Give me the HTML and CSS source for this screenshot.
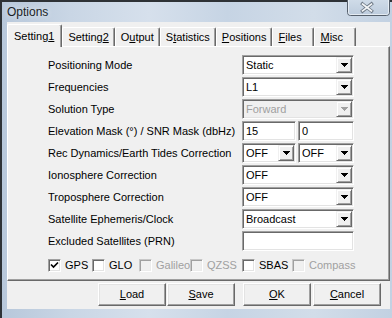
FILE: index.html
```html
<!DOCTYPE html>
<html>
<head>
<meta charset="utf-8">
<link rel="stylesheet" href="styles.css">
</head>
<body>
<div class="window">
  <div class="titlebar">
    <span class="title">Options</span>
    <svg class="close" width="43" height="16" viewBox="0 0 43 16">
      <defs>
        <linearGradient id="cg" x1="0" y1="0" x2="0" y2="1">
          <stop offset="0" stop-color="#cfdbe8"/>
          <stop offset="1" stop-color="#bccbdc"/>
        </linearGradient>
      </defs>
      <path d="M0.5 0 V12.5 a3 3 0 0 0 3 3 H39.5 a3 3 0 0 0 3 -3 V0" fill="url(#cg)" stroke="#56606c"/>
      <path d="M1.5 0 V12.5 a2 2 0 0 0 2 2 H39.5 a2 2 0 0 0 2 -2 V0" fill="none" stroke="#eef3f8" stroke-opacity="0.8"/>
      <path d="M15.5 4 L24.5 11 M24.5 4 L15.5 11" stroke="#6f7a87" stroke-width="3.4" stroke-linecap="square"/>
      <path d="M15.5 4 L24.5 11 M24.5 4 L15.5 11" stroke="#f4f6f8" stroke-width="1.6" stroke-linecap="square"/>
    </svg>
  </div>
  <div class="client">
    <div class="tabs">
      <div class="tab active">Setting<u>1</u></div>
      <div class="tab">Setting<u>2</u></div>
      <div class="tab">O<u>u</u>tput</div>
      <div class="tab">S<u>t</u>atistics</div>
      <div class="tab"><u>P</u>ositions</div>
      <div class="tab wide"><u>F</u>iles</div>
      <div class="tab wide"><u>M</u>isc</div>
    </div>
    <div class="panel">
      <div class="form">
        <div class="lbl">Positioning Mode</div>
        <div class="combo"><span class="val">Static</span><span class="drop"><svg width="7" height="4" viewBox="0 0 7 4"><path d="M0 0h7v1h-1v1h-1v1h-1v1h-1v-1h-1v-1h-1v-1h-1z"/></svg></span></div>

        <div class="lbl">Frequencies</div>
        <div class="combo"><span class="val">L1</span><span class="drop"><svg width="7" height="4" viewBox="0 0 7 4"><path d="M0 0h7v1h-1v1h-1v1h-1v1h-1v-1h-1v-1h-1v-1h-1z"/></svg></span></div>

        <div class="lbl">Solution Type</div>
        <div class="combo disabled"><span class="val">Forward</span><span class="drop"><svg width="7" height="4" viewBox="0 0 7 4"><path d="M0 0h7v1h-1v1h-1v1h-1v1h-1v-1h-1v-1h-1v-1h-1z"/></svg></span></div>

        <div class="lbl">Elevation Mask (°) / SNR Mask (dbHz)</div>
        <div class="pair">
          <div class="edit first"><span class="val">15</span></div>
          <div class="edit second"><span class="val">0</span></div>
        </div>

        <div class="lbl">Rec Dynamics/Earth Tides Correction</div>
        <div class="pair">
          <div class="combo first"><span class="val">OFF</span><span class="drop"><svg width="7" height="4" viewBox="0 0 7 4"><path d="M0 0h7v1h-1v1h-1v1h-1v1h-1v-1h-1v-1h-1v-1h-1z"/></svg></span></div>
          <div class="combo second"><span class="val">OFF</span><span class="drop"><svg width="7" height="4" viewBox="0 0 7 4"><path d="M0 0h7v1h-1v1h-1v1h-1v1h-1v-1h-1v-1h-1v-1h-1z"/></svg></span></div>
        </div>

        <div class="lbl">Ionosphere Correction</div>
        <div class="combo"><span class="val">OFF</span><span class="drop"><svg width="7" height="4" viewBox="0 0 7 4"><path d="M0 0h7v1h-1v1h-1v1h-1v1h-1v-1h-1v-1h-1v-1h-1z"/></svg></span></div>

        <div class="lbl">Troposphere Correction</div>
        <div class="combo"><span class="val">OFF</span><span class="drop"><svg width="7" height="4" viewBox="0 0 7 4"><path d="M0 0h7v1h-1v1h-1v1h-1v1h-1v-1h-1v-1h-1v-1h-1z"/></svg></span></div>

        <div class="lbl">Satellite Ephemeris/Clock</div>
        <div class="combo"><span class="val">Broadcast</span><span class="drop"><svg width="7" height="4" viewBox="0 0 7 4"><path d="M0 0h7v1h-1v1h-1v1h-1v1h-1v-1h-1v-1h-1v-1h-1z"/></svg></span></div>

        <div class="lbl">Excluded Satellites (PRN)</div>
        <div class="edit"><span class="val"></span></div>
      </div>
      <div class="checks">
        <div class="chk"><span class="box"><svg width="9" height="9" viewBox="0 0 9 9"><path d="M1 3.5 L3.5 6 L8 1.5" fill="none" stroke="#000" stroke-width="1.7"/></svg></span><span>GPS</span></div>
        <div class="chk"><span class="box"></span><span>GLO</span></div>
        <div class="chk off"><span class="box"></span><span>Galileo</span></div>
        <div class="chk off"><span class="box"></span><span>QZSS</span></div>
        <div class="chk"><span class="box"></span><span>SBAS</span></div>
        <div class="chk off"><span class="box"></span><span>Compass</span></div>
      </div>
    </div>
    <div class="buttons">
      <div class="btn"><u>L</u>oad</div>
      <div class="btn"><u>S</u>ave</div>
      <div class="btn ok"><u>O</u>K</div>
      <div class="btn"><u>C</u>ancel</div>
    </div>
  </div>
</div>
</body>
</html>
```

FILE: styles.css
```css
* { box-sizing: border-box; }
html, body { margin: 0; padding: 0; }
body {
  width: 392px;
  height: 318px;
  overflow: hidden;
  font-family: "Liberation Sans", Arial, sans-serif;
  font-size: 11px;
  color: #000;
}
u { text-decoration: underline; text-underline-offset: 1px; }

.window {
  width: 392px;
  height: 318px;
  display: flex;
  flex-direction: column;
  padding: 0 2px 9px 7px;
  background:
    linear-gradient(90deg, #b7c7da 0%, #c9d6e5 18%, #d6e0ec 38%, #c6d4e4 58%, #d2dde9 80%, #c2d1e2 100%);
  box-shadow: inset 2px 2px 0 #2e3236;
}

.titlebar {
  height: 22px;
  display: flex;
  justify-content: space-between;
  align-items: flex-start;
  flex: none;
}
.title {
  font-size: 12px;
  line-height: 14px;
  padding-top: 5px;
  color: #1a1f26;
  text-shadow: 0 0 6px rgba(255,255,255,0.8);
}
.close { display: block; }

.client {
  height: 287px;
  background: #f0f0f0;
  display: flex;
  flex-direction: column;
  flex: none;
}

.tabs {
  height: 24px;
  display: flex;
  align-items: flex-end;
  padding: 0 0 0 2px;
  position: relative;
  z-index: 1;
  flex: none;
}
.tab {
  height: 19px;
  padding: 3px 5px 0 5px;
  line-height: 13px;
  background: #f0f0f0;
  border-left: 1px solid #fff;
  border-top: 1px solid #fff;
  border-right: 1px solid #696969;
  border-radius: 2px 2px 0 0;
  box-shadow: inset -1px 0 0 #a0a0a0;
  white-space: nowrap;
}
.tab.wide { min-width: 42px; }
.tab.active {
  height: 23px;
  margin-left: -2px;
  margin-bottom: -1px;
  padding: 5px 7px 0 6px;
}

.panel {
  height: 235px;
  border: 1px solid;
  border-color: #fff #696969 #696969 #fff;
  box-shadow: inset -1px -1px 0 #a0a0a0;
  padding: 8px 0 0 40px;
  flex: none;
}

.form {
  display: grid;
  grid-template-columns: 194px 112px;
  grid-auto-rows: 20px;
  row-gap: 2px;
}
.lbl {
  align-self: center;
  white-space: nowrap;
  line-height: 13px;
}

.combo, .edit {
  position: relative;
  height: 20px;
  background: #fff;
  border: 1px solid;
  border-color: #a0a0a0 #fff #fff #a0a0a0;
  box-shadow: inset 1px 1px 0 #696969, inset -1px -1px 0 #e3e3e3;
  display: flex;
  align-items: center;
  padding: 1px 1px 1px 3px;
}
.val {
  flex: 1;
  line-height: 13px;
  white-space: nowrap;
  overflow: hidden;
}
.drop {
  flex: none;
  width: 16px;
  height: 16px;
  background: #f0f0f0;
  border: 1px solid;
  border-color: #f0f0f0 #696969 #696969 #f0f0f0;
  box-shadow: inset 1px 1px 0 #fff, inset -1px -1px 0 #a0a0a0;
  display: flex;
  align-items: center;
  justify-content: center;
}
.drop svg { display: block; fill: #000; }
.combo.disabled { background: #f0f0f0; }
.combo.disabled .val { color: #a0a0a0; }
.combo.disabled .drop svg { fill: #a0a0a0; }

.pair {
  display: flex;
  gap: 2px;
}
.pair .first { width: 54px; }
.pair .second { width: 56px; }

.checks {
  margin-top: 8px;
  display: grid;
  grid-template-columns: 44px 47px 51px 52px 50px auto;
  height: 13px;
}
.chk {
  display: flex;
  align-items: center;
  gap: 4px;
  line-height: 13px;
  white-space: nowrap;
}
.box {
  width: 13px;
  height: 13px;
  flex: none;
  background: #fff;
  border: 1px solid;
  border-color: #a0a0a0 #fff #fff #a0a0a0;
  box-shadow: inset 1px 1px 0 #696969, inset -1px -1px 0 #e3e3e3;
  display: flex;
  align-items: center;
  justify-content: center;
}
.box svg { display: block; }
.chk.off { color: #a0a0a0; }
.chk.off .box {
  background: #f0f0f0;
  border-color: #c8c8c8 #fff #fff #c8c8c8;
  box-shadow: inset 1px 1px 0 #a0a0a0, inset -1px -1px 0 #ececec;
}

.buttons {
  flex: 1;
  display: flex;
  justify-content: flex-end;
  align-items: flex-start;
  padding: 2px 9px 0 0;
}
.btn {
  width: 68px;
  height: 23px;
  margin-left: 1px;
  background: #f0f0f0;
  border: 1px solid;
  border-color: #fff #696969 #696969 #fff;
  box-shadow: inset -1px -1px 0 #a0a0a0, inset 1px 1px 0 #e3e3e3;
  display: flex;
  align-items: center;
  justify-content: center;
  line-height: 13px;
}
.btn.ok { margin-left: 8px; }
.btn.ok + .btn { margin-left: 2px; }
```
